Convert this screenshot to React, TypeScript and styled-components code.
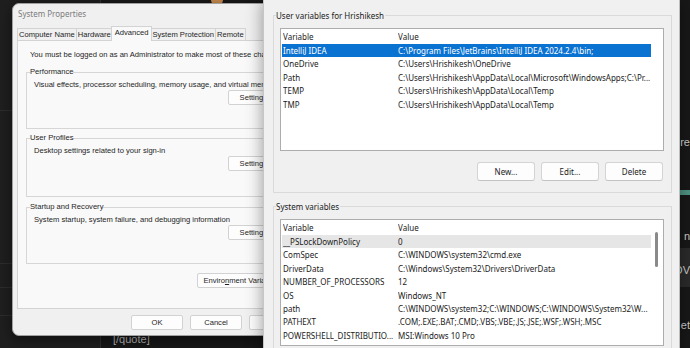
import React from 'react';
import styled, { createGlobalStyle } from 'styled-components';

const classicFont = `"Liberation Sans", Arial, sans-serif`;
const modernFont = `"Noto Sans", "Open Sans", sans-serif`;

const GlobalStyle = createGlobalStyle`
  html, body {
    margin: 0;
    padding: 0;
    background: #1c1c1c;
  }
  #root {
    width: 690px;
    height: 348px;
  }
`;

const Desktop = styled.div`
  position: relative;
  width: 690px;
  height: 348px;
  overflow: hidden;
  background: #1d1d1d;
`;

/* forum page sitting behind the two windows */
const Backdrop = styled.div`
  position: absolute;
  inset: 0;
  display: grid;
  grid-template-columns: 100px 1fr;
`;

const Rail = styled.div`
  display: flex;
  flex-direction: column;
  background: #1f1f1f;
`;

const RailRow = styled.div<{ $h: number }>`
  flex-shrink: 0;
  height: ${({ $h }) => $h}px;
  border-bottom: 1px solid #2d2d2d;
`;

const Thread = styled.div`
  display: flex;
  flex-direction: column;
  background: #181818;
  border-left: 1px solid #303030;
  font-family: ${classicFont};
  font-size: 11px;
  color: #cfcfcf;
`;

const Avatar = styled.div`
  width: 12px;
  height: 12px;
  margin: -6px 0 0 110px;
  border-radius: 50%;
  background: #c98a4e;
`;

const ThreadLine = styled.div<{ $top: number }>`
  margin-top: ${({ $top }) => $top}px;
  height: 13px;
  line-height: 13px;
  text-align: right;
  white-space: nowrap;
`;

const QuoteBar = styled.div`
  margin-top: 41px;
  height: 5px;
  background: #4f9483;
`;

const CodeBlock = styled.div`
  margin-top: 5px;
  height: 39px;
  padding-top: 16px;
  box-sizing: border-box;
  background: #2b2b2b;
`;

const QuoteTag = styled.div`
  margin-top: 1px;
  padding-left: 12px;
  line-height: 13px;
  color: #bdbdbd;
`;

/* classic System Properties dialog */
const Dialog = styled.div`
  position: absolute;
  left: 12px;
  top: 3px;
  width: 294px;
  height: 333px;
  box-sizing: border-box;
  display: flex;
  flex-direction: column;
  padding: 0 4px;
  background: #f0f0f0;
  border: 1px solid #a0a0a0;
  border-radius: 7px;
  box-shadow: 0 4px 14px rgba(0, 0, 0, 0.5);
  font-family: ${classicFont};
  font-size: 7.6px;
  color: #1e1e1e;
`;

const TitleBar = styled.div`
  height: 24px;
  flex-shrink: 0;
  padding: 5px 0 0 1px;
  box-sizing: border-box;
  font-family: ${modernFont};
  font-size: 8px;
  line-height: 10px;
  color: #7c7c7c;
`;

const TabStrip = styled.div`
  display: flex;
  align-items: flex-end;
  height: 12px;
  flex-shrink: 0;
  position: relative;
  z-index: 1;
`;

const Tab = styled.div<{ $active?: boolean }>`
  height: ${({ $active }) => ($active ? 15 : 12)}px;
  margin: ${({ $active }) => ($active ? '0 -2px -1px -1px' : '0 -1px 0 0')};
  padding: ${({ $active }) => ($active ? '0 3px' : '0 1px')};
  box-sizing: border-box;
  border: 1px solid #d3d3d3;
  border-bottom: none;
  background: ${({ $active }) => ($active ? '#f9f9f9' : '#f0f0f0')};
  line-height: ${({ $active }) => ($active ? 12 : 11)}px;
  white-space: nowrap;
  position: relative;
  z-index: ${({ $active }) => ($active ? 2 : 0)};
`;

const TabPage = styled.div`
  height: 269px;
  flex-shrink: 0;
  box-sizing: border-box;
  display: flex;
  flex-direction: column;
  padding: 9px 8px 0;
  background: #f9f9f9;
  border: 1px solid #d3d3d3;
  overflow: hidden;
`;

const Notice = styled.div`
  margin-left: 4px;
  line-height: 10px;
  white-space: nowrap;
`;

const GroupBox = styled.fieldset<{ $h: number; $gap: number }>`
  margin: ${({ $gap }) => $gap}px 0 0;
  padding: 0;
  min-width: 0;
  height: ${({ $h }) => $h}px;
  box-sizing: border-box;
  border: 1px solid #d6d6d6;
  display: flex;
  flex-direction: column;
`;

const GroupLegend = styled.legend`
  margin-left: 3px;
  padding: 0;
  line-height: 10px;
`;

const GroupBody = styled.div`
  flex: 1;
  display: flex;
  flex-direction: column;
  justify-content: space-between;
  padding: 3px 6px 7px 7px;
`;

const GroupText = styled.div`
  line-height: 10px;
  white-space: nowrap;
`;

const ClassicButton = styled.button<{ $w: number; $disabled?: boolean }>`
  width: ${({ $w }) => $w}px;
  height: 15px;
  padding: 0;
  flex-shrink: 0;
  background: #fdfdfd;
  border: 1px solid #d2d2d2;
  border-radius: 2px;
  font-family: ${classicFont};
  font-size: 7.6px;
  color: ${({ $disabled }) => ($disabled ? '#a0a0a0' : '#1e1e1e')};
  white-space: nowrap;
  align-self: flex-end;
`;

const AccessKey = styled.span`
  text-decoration: underline;
`;

const EnvButtonRow = styled.div`
  margin-top: 9px;
  display: flex;
  justify-content: flex-end;
`;

const DialogFooter = styled.div`
  display: flex;
  justify-content: flex-end;
  gap: 7px;
  padding-top: 6px;
`;

/* Environment Variables window */
const EnvWindow = styled.div`
  position: absolute;
  left: 263px;
  top: 0;
  width: 417px;
  height: 370px;
  box-sizing: border-box;
  padding: 10px 7px 0 9px;
  background: #f0f0f0;
  border-left: 1px solid #c6c6c6;
  border-right: 1px solid #bdbdbd;
  box-shadow: 0 0 16px rgba(0, 0, 0, 0.4);
  font-family: ${modernFont};
  font-size: 8px;
  color: #1b1b1b;
`;

const EnvGroup = styled.fieldset<{ $gap?: number }>`
  margin: ${({ $gap }) => $gap ?? 0}px 0 0;
  padding: 7px 7px 11px 6px;
  min-width: 0;
  border: 1px solid #dadada;
`;

const EnvLegend = styled.legend`
  margin-left: -4px;
  padding: 0 1px 0 0;
  line-height: 11px;
`;

const ListBox = styled.div<{ $h: number }>`
  height: ${({ $h }) => $h}px;
  box-sizing: border-box;
  display: grid;
  grid-template-columns: 1fr 12px;
  background: #ffffff;
  border: 1px solid #adadad;
  overflow: hidden;
`;

const ListMain = styled.div`
  display: flex;
  flex-direction: column;
  min-width: 0;
`;

const ListHeader = styled.div`
  height: 15px;
  flex-shrink: 0;
  display: grid;
  grid-template-columns: 115px 1fr;
  padding-left: 2px;
  line-height: 15px;
`;

const ListRow = styled.div<{ $selected?: boolean; $hover?: boolean }>`
  height: 13.4px;
  flex-shrink: 0;
  margin-left: 1px;
  padding-left: 1px;
  display: grid;
  grid-template-columns: 115px 1fr;
  line-height: 13.4px;
  background: ${({ $selected, $hover }) =>
    $selected ? '#0a72d1' : $hover ? '#e6e6e6' : 'transparent'};
  color: ${({ $selected }) => ($selected ? '#ffffff' : '#1b1b1b')};
`;

const Cell = styled.span`
  white-space: nowrap;
  overflow: hidden;
`;

const ScrollTrack = styled.div`
  display: flex;
  flex-direction: column;
  padding: 12px 0 0 4px;
`;

const ScrollThumb = styled.div`
  width: 3px;
  height: 35px;
  border-radius: 2px;
  background: #8a8a8a;
`;

const EnvButtonBar = styled.div`
  margin-top: 11px;
  display: flex;
  justify-content: flex-end;
  gap: 6px;
  padding-right: 1px;
`;

const ModernButton = styled.button`
  width: 58px;
  height: 19px;
  padding: 0;
  background: #fdfdfd;
  border: 1px solid #d4d4d4;
  border-bottom-color: #c4c4c4;
  border-radius: 3px;
  font-family: ${modernFont};
  font-size: 8px;
  color: #1b1b1b;
`;

type EnvVar = { name: string; value: string };

const userVars: EnvVar[] = [
  { name: 'IntelliJ IDEA', value: 'C:\\Program Files\\JetBrains\\IntelliJ IDEA 2024.2.4\\bin;' },
  { name: 'OneDrive', value: 'C:\\Users\\Hrishikesh\\OneDrive' },
  { name: 'Path', value: 'C:\\Users\\Hrishikesh\\AppData\\Local\\Microsoft\\WindowsApps;C:\\Pr...' },
  { name: 'TEMP', value: 'C:\\Users\\Hrishikesh\\AppData\\Local\\Temp' },
  { name: 'TMP', value: 'C:\\Users\\Hrishikesh\\AppData\\Local\\Temp' },
];

const systemVars: EnvVar[] = [
  { name: '__PSLockDownPolicy', value: '0' },
  { name: 'ComSpec', value: 'C:\\WINDOWS\\system32\\cmd.exe' },
  { name: 'DriverData', value: 'C:\\Windows\\System32\\Drivers\\DriverData' },
  { name: 'NUMBER_OF_PROCESSORS', value: '12' },
  { name: 'OS', value: 'Windows_NT' },
  { name: 'path', value: 'C:\\WINDOWS\\system32;C:\\WINDOWS;C:\\WINDOWS\\System32\\W...' },
  { name: 'PATHEXT', value: '.COM;.EXE;.BAT;.CMD;.VBS;.VBE;.JS;.JSE;.WSF;.WSH;.MSC' },
  { name: 'POWERSHELL_DISTRIBUTIO...', value: 'MSI:Windows 10 Pro' },
];

const tabs = ['Computer Name', 'Hardware', 'Advanced', 'System Protection', 'Remote'];

const VarList = ({
  vars,
  height,
  selected,
  hover,
  scroll,
}: {
  vars: EnvVar[];
  height: number;
  selected?: number;
  hover?: number;
  scroll?: boolean;
}) => (
  <ListBox $h={height}>
    <ListMain>
      <ListHeader>
        <Cell>Variable</Cell>
        <Cell>Value</Cell>
      </ListHeader>
      {vars.map((v, i) => (
        <ListRow key={v.name} $selected={i === selected} $hover={i === hover}>
          <Cell>{v.name}</Cell>
          <Cell>{v.value}</Cell>
        </ListRow>
      ))}
    </ListMain>
    <ScrollTrack>{scroll && <ScrollThumb />}</ScrollTrack>
  </ListBox>
);

const SettingsGroup = ({
  title,
  text,
  height,
  gap,
}: {
  title: string;
  text: string;
  height: number;
  gap: number;
}) => (
  <GroupBox $h={height} $gap={gap}>
    <GroupLegend>{title}</GroupLegend>
    <GroupBody>
      <GroupText>{text}</GroupText>
      <ClassicButton $w={57}>Settings...</ClassicButton>
    </GroupBody>
  </GroupBox>
);

export default function App() {
  return (
    <>
      <GlobalStyle />
      <Desktop>
        <Backdrop>
          <Rail>
            <RailRow $h={110} />
            <RailRow $h={152} />
            <RailRow $h={23} />
            <RailRow $h={27} />
          </Rail>
          <Thread>
            <Avatar />
            <ThreadLine $top={130}>ere</ThreadLine>
            <QuoteBar />
            <ThreadLine $top={35}>n</ThreadLine>
            <CodeBlock>
              <ThreadLine $top={0}>OV</ThreadLine>
            </CodeBlock>
            <ThreadLine $top={32}>et</ThreadLine>
            <QuoteTag>[/quote]</QuoteTag>
          </Thread>
        </Backdrop>

        <Dialog>
          <TitleBar>System Properties</TitleBar>
          <TabStrip>
            {tabs.map((t) => (
              <Tab key={t} $active={t === 'Advanced'}>
                {t}
              </Tab>
            ))}
          </TabStrip>
          <TabPage>
            <Notice>
              You must be logged on as an Administrator to make most of these changes.
            </Notice>
            <SettingsGroup
              gap={7}
              height={62}
              title="Performance"
              text="Visual effects, processor scheduling, memory usage, and virtual memory"
            />
            <SettingsGroup
              gap={4}
              height={64}
              title="User Profiles"
              text="Desktop settings related to your sign-in"
            />
            <SettingsGroup
              gap={5}
              height={62}
              title="Startup and Recovery"
              text="System startup, system failure, and debugging information"
            />
            <EnvButtonRow>
              <ClassicButton $w={95}>
                Enviro<AccessKey>n</AccessKey>ment Variables...
              </ClassicButton>
            </EnvButtonRow>
          </TabPage>
          <DialogFooter>
            <ClassicButton $w={52}>OK</ClassicButton>
            <ClassicButton $w={52}>Cancel</ClassicButton>
            <ClassicButton $w={52} $disabled>
              Apply
            </ClassicButton>
          </DialogFooter>
        </Dialog>

        <EnvWindow>
          <EnvGroup>
            <EnvLegend>User variables for Hrishikesh</EnvLegend>
            <VarList vars={userVars} height={123} selected={0} />
            <EnvButtonBar>
              <ModernButton>New...</ModernButton>
              <ModernButton>Edit...</ModernButton>
              <ModernButton>Delete</ModernButton>
            </EnvButtonBar>
          </EnvGroup>
          <EnvGroup $gap={8}>
            <EnvLegend>System variables</EnvLegend>
            <VarList vars={systemVars} height={127} hover={0} scroll />
          </EnvGroup>
        </EnvWindow>
      </Desktop>
    </>
  );
}
